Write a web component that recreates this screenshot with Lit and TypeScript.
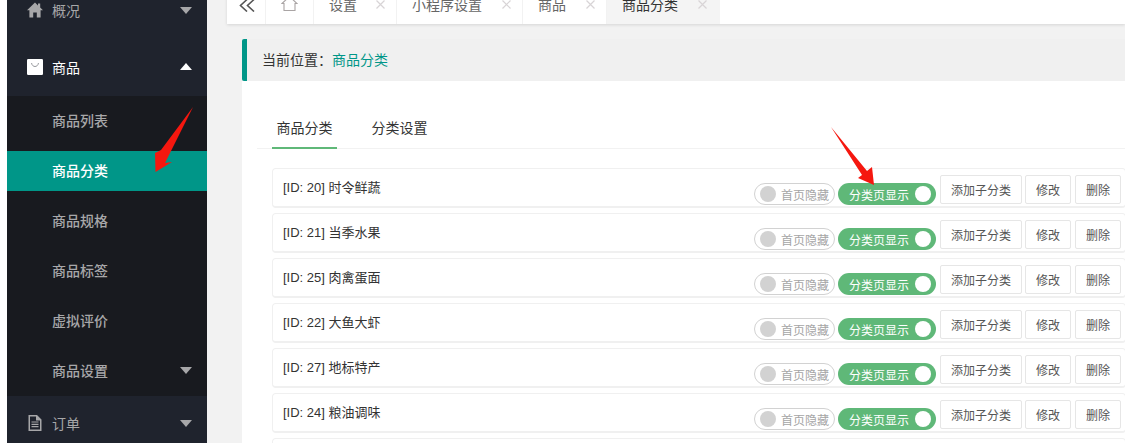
import { LitElement, html, css, svg } from "lit";
import { customElement } from "lit/decorators.js";

const caret = (up: boolean) => html`<svg class="caret" width="12" height="7" viewBox="0 0 12 7"><path d=${up ? "M6 0L12 7H0Z" : "M0 0H12L6 7Z"} fill="currentColor"></path></svg>`;
const rows = [
  ["20", "时令鲜蔬"], ["21", "当季水果"], ["25", "肉禽蛋面"], ["22", "大鱼大虾"], ["27", "地标特产"], ["24", "粮油调味"], ["26", "休闲零食"],
];
const subs = ["商品列表", "商品分类", "商品规格", "商品标签", "虚拟评价", "商品设置"];
const tabs = [["设置", 83], ["小程序设置", 126], ["商品", 84], ["商品分类", 113]];

@customElement("app-root")
export class AppRoot extends LitElement {
  static styles = css`
    :host { display: block; position: relative; width: 1125px; height: 443px; overflow: hidden; background: #f2f2f2; font-family: "Noto Sans CJK SC", "Liberation Sans", sans-serif; }
    .app { display: flex; height: 443px; overflow: hidden; }
    .gutter { width: 7px; background: #fff; flex: none; }
    .side { width: 200px; flex: none; background: #1f232d; margin-top: -17px; height: 460px; overflow: hidden; }
    .top { height: 56.5px; box-sizing: border-box; padding: 0 15px 2px 20px; display: flex; align-items: center; color: #a7a7a9; font-size: 14px; }
    .top.open { color: #fff; }
    .top svg.ic { width: 16px; height: 16px; margin-right: 9px; flex: none; }
    .top span { flex: 1; }
    .caret { color: #a7a7a9; flex: none; }
    .open .caret { color: #fff; }
    .subs { background: #181a1f; }
    .sub { height: 50px; box-sizing: border-box; display: flex; align-items: center; padding: 0 15px 2px 45px; color: #a7a7a9; font-size: 14px; font-weight: 500; }
    .sub span { flex: 1; }
    .sub.on { height: 40px; margin: 5px 0; background: #009688; color: #fff; }
    .main { flex: 1; min-width: 0; padding-left: 20px; }
    .tabbar { height: 40px; margin-top: -16px; background: #fff; display: flex; box-shadow: 0 1px 3px rgba(0,0,0,.12); }
    .tab { display: flex; align-items: center; box-sizing: border-box; border-right: 1px solid #f2f2f2; font-size: 14px; color: #666; padding-left: 15px; flex: none; }
    .tab.back { width: 39px; padding: 2px 0 0 12px; }
    .tab.home { width: 48px; padding-left: 15px; }
    .tab.on { background: #f4f4f4; color: #333; border-right: 0; }
    .tab span { flex: 1; }
    .tab svg.x { margin-right: 11px; flex: none; }
    .tab.on svg.x { margin-right: 13px; }
    .panel { margin: 15px 0 0 15px; }
    .crumb { height: 42px; box-sizing: border-box; background: #f0f0f0; border-left: 5px solid #009688; border-radius: 2px 0 0 2px; display: flex; align-items: center; padding: 0 0 2px 15px; font-size: 14px; color: #333; }
    .crumb b { font-weight: 400; color: #009688; }
    .body { background: #fff; height: 400px; padding: 27px 0 0 15px; }
    .tabs2 { display: flex; height: 40px; border-bottom: 1px solid #f2f2f2; font-size: 14px; color: #333; padding-left: 15px; }
    .tabs2 div { width: 57px; height: 41px; box-sizing: border-box; padding-bottom: 4px; margin-right: 34px; display: flex; align-items: center; justify-content: center; }
    .tabs2 div.on { width: 65px; border-bottom: 2px solid #5fb878; padding-bottom: 2px; }
    .list { display: flex; flex-direction: column; gap: 5px; padding: 19px 0 0 15px; width: 854px; }
    .row { height: 40px; box-sizing: border-box; border: 2px solid #f0f0f0; border-width: 1px 1px 2px; border-radius: 4px; display: flex; align-items: center; padding: 0 0 2px 10px; font-family: "Liberation Sans", "Noto Sans CJK SC", sans-serif; font-size: 13px; color: #333; }
    .row .name { flex: 1; }
    .ops { display: flex; align-items: flex-start; align-self: flex-start; padding-top: 6px; width: 371px; flex: none; }
    .sw { height: 22px; box-sizing: border-box; border-radius: 11px; display: flex; align-items: center; font-size: 12px; margin-top: 8px; font-family: "Noto Sans CJK SC", sans-serif; flex: none; }
    .sw.off { width: 81px; border: 1px solid #d2d2d2; color: #a5a5a5; padding-left: 5px; margin-right: 3px; background: #fff; }
    .sw.off::before { content: ""; width: 16px; height: 16px; border-radius: 50%; background: #d2d2d2; margin-right: 5px; flex: none; }
    .sw.on { width: 98px; background: #5fb878; color: #fff; padding: 0 5px 0 11px; margin-right: 4px; justify-content: space-between; }
    .sw.on::after { content: ""; width: 16px; height: 16px; border-radius: 50%; background: #fff; flex: none; }
    .btn { height: 29px; box-sizing: border-box; border: 1px solid #e6e6e6; border-radius: 2px; display: flex; align-items: center; justify-content: center; font-size: 12px; color: #555; font-family: "Noto Sans CJK SC", sans-serif; flex: none; background: #fff; }
    .btn.w1 { width: 82px; margin-right: 3px; }
    .btn.w2 { width: 46px; margin-right: 4px; }
    .arrows { position: absolute; left: 0; top: 0; pointer-events: none; }
  `;

  render() {
    return html`
      <div class="app">
        <div class="gutter"></div>
        <nav class="side">
          <div class="top">
            <svg class="ic" viewBox="0 0 16 16"><path d="M8 .5L0 8.2H2.4V15.5H6.2V10.5H9.8V15.5H13.6V8.2H16L13.2 5.5V1.5H11V3.4Z" fill="#a7a7a9"></path></svg>
            <span>概况</span>${caret(false)}
          </div>
          <div class="top open">
            <svg class="ic" viewBox="0 0 16 16"><rect x="0" y="0" width="16" height="16" rx="1.2" fill="#fff"></rect><path d="M4.5 4C5 6.5 6.5 7.5 8 7.5S11 6.5 11.5 4" fill="none" stroke="#8b8d92" stroke-width=".9"></path></svg>
            <span>商品</span>${caret(true)}
          </div>
          <div class="subs">
            ${subs.map((s, i) => html`<div class="sub ${i === 1 ? "on" : ""}"><span>${s}</span>${i === 5 ? caret(false) : ""}</div>`)}
          </div>
          <div class="top">
            <svg class="ic" viewBox="0 0 16 16"><path d="M1.5 0H10L14.5 4.5V16H1.5Z M3 1.5V14.5H13V5.6H9V1.5Z" fill="#a7a7a9" fill-rule="evenodd"></path><path d="M4.5 7H11.5M4.5 9.3H11.5M4.5 11.6H11.5" stroke="#a7a7a9" stroke-width="1.2"></path></svg>
            <span>订单</span>${caret(false)}
          </div>
        </nav>
        <div class="main">
          <div class="tabbar">
            <div class="tab back"><svg width="16" height="13" viewBox="0 0 16 13"><path d="M8 .5L1.5 6.5L8 12.5M15 .5L8.5 6.5L15 12.5" fill="none" stroke="#555" stroke-width="1.6"></path></svg></div>
            <div class="tab home"><svg width="17" height="16" viewBox="0 0 17 16"><path d="M1 7.5L8.5 .5L16 7.5H14V14.5H3V7.5Z" fill="none" stroke="#a9a4a4" stroke-width="1.1"></path></svg></div>
            ${tabs.map(([t, w], i) => html`<div class="tab ${i === 3 ? "on" : ""}" style="width:${w}px"><span>${t}</span><svg class="x" width="9" height="9" viewBox="0 0 9 9"><path d="M.5 .5L8.5 8.5M8.5 .5L.5 8.5" stroke="#d8d4d6" stroke-width="1.2"></path></svg></div>`)}
          </div>
          <div class="panel">
            <div class="crumb">当前位置：<b>商品分类</b></div>
            <div class="body">
              <div class="tabs2"><div class="on">商品分类</div><div>分类设置</div></div>
              <div class="list">
                ${rows.map(([id, n]) => html`<div class="row">
                  <div class="name">[ID: ${id}] ${n}</div>
                  <div class="ops">
                    <div class="sw off">首页隐藏</div>
                    <div class="sw on">分类页显示</div>
                    <div class="btn w1">添加子分类</div>
                    <div class="btn w2">修改</div>
                    <div class="btn w2">删除</div>
                  </div>
                </div>`)}
              </div>
            </div>
          </div>
        </div>
      </div>
      <svg class="arrows" width="1125" height="443" viewBox="0 0 1125 443">
        ${svg`<path d="M193 107L165 163L172 162L155.5 172L155 153L161 150Z" fill="#f5170f"></path>
        <path d="M831 127L867 171L872 167L874 185L858 178L862 175Z" fill="#f5170f"></path>`}
      </svg>
    `;
  }
}
